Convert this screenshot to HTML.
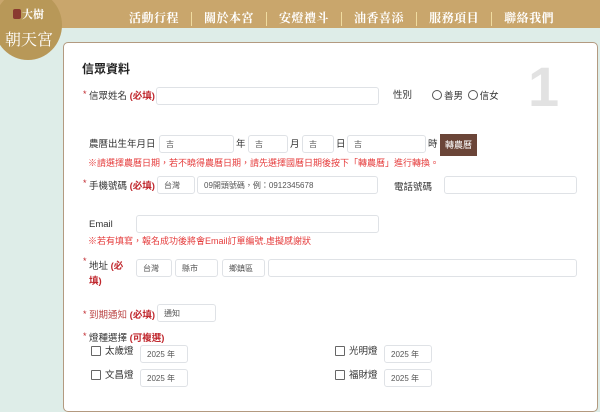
<!DOCTYPE html>
<html><head><meta charset="utf-8"><style>
*{margin:0;padding:0;box-sizing:border-box}
body{width:600px;height:407px;overflow:hidden;position:relative;background:#deede8;font-family:"Liberation Sans","Noto Sans CJK TC",sans-serif;font-size:9.5px;color:#333}
.a{position:absolute;white-space:nowrap;line-height:12px}
.top{position:absolute;left:0;top:0;width:600px;height:28px;background:#c9a66c}
.nav{position:absolute;top:11px;left:129px;font-family:"Noto Serif CJK SC",serif;font-size:12px;line-height:14px;color:#fff;font-weight:bold;letter-spacing:0.5px}
.sep{display:inline-block;width:1px;height:14px;background:#f0dca0;margin:0 12px;vertical-align:middle}
.logo{position:absolute;left:-6px;top:-10px;width:68px;height:70px;border-radius:50%;background:#b89858}
.card{position:absolute;left:63px;top:42px;width:535px;height:370px;background:#fff;border:1px solid #b39a80;border-radius:5px}
.in{position:absolute;border:1px solid #dfe2e6;border-radius:3px;background:#fff;height:18px;font-size:8px;line-height:10px;color:#555;padding:4px 0 0 6px}
.red{color:#c0272d;font-weight:bold}
.st{color:#c0272d;font-size:9px}
.warn{color:#e53b3b;font-size:9px}
.cb{position:absolute;width:10px;height:10px;border:1px solid #666;border-radius:1px;background:#fff}
.rd{display:inline-block;width:10px;height:10px;border:1px solid #555;border-radius:50%;vertical-align:-1px;margin-right:2px}
</style></head><body>
<div class="top"></div>
<div class="a nav"><span>活動行程</span><i class="sep"></i><span>關於本宮</span><i class="sep"></i><span>安燈禮斗</span><i class="sep"></i><span>油香喜添</span><i class="sep"></i><span>服務項目</span><i class="sep"></i><span>聯絡我們</span></div>
<div class="logo"></div>
<div class="a" style="left:13px;top:9px;width:8px;height:10px;background:#8a3a30;border-radius:2px"></div>
<div class="a" style="left:22px;top:8px;color:#fff;font-weight:bold;font-size:11px;font-family:'Noto Serif CJK SC',serif">大樹</div>
<div class="a" style="left:5px;top:30px;color:#fff;font-size:16px;line-height:18px;font-family:'Noto Serif CJK SC',serif">朝天宮</div>
<div class="card"></div>
<div class="a" style="left:82px;top:62px;font-size:12px;font-weight:bold;color:#222;line-height:14px">信眾資料</div>
<div class="a" style="left:528px;top:62px;font-size:56px;line-height:50px;font-weight:bold;color:#e2e2e2">1</div>
<div class="a st" style="left:83px;top:88px">*</div>
<div class="a" style="left:89px;top:91px">信眾姓名 <span class="red">(必填)</span></div>
<div class="in" style="left:156px;top:87px;width:223px"></div>
<div class="a" style="left:393px;top:90px">性別</div>
<div class="a" style="left:432px;top:90px"><i class="rd"></i>善男 <i class="rd" style="margin-left:2px"></i>信女</div>
<div class="a" style="left:89px;top:139px">農曆出生年月日</div>
<div class="in" style="left:159px;top:135px;width:75px">吉</div>
<div class="a" style="left:236px;top:139px">年</div>
<div class="in" style="left:248px;top:135px;width:40px">吉</div>
<div class="a" style="left:290px;top:139px">月</div>
<div class="in" style="left:302px;top:135px;width:32px">吉</div>
<div class="a" style="left:336px;top:139px">日</div>
<div class="in" style="left:347px;top:135px;width:79px">吉</div>
<div class="a" style="left:428px;top:139px">時</div>
<div class="a" style="left:440px;top:134px;width:37px;height:22px;background:#6b4538;color:#fff;font-size:9px;padding-top:5px;text-align:center">轉農曆</div>
<div class="a warn" style="left:88px;top:157px">※請選擇農曆日期，若不曉得農曆日期，請先選擇國曆日期後按下「轉農曆」進行轉換。</div>
<div class="a st" style="left:83px;top:177px">*</div>
<div class="a" style="left:89px;top:181px">手機號碼 <span class="red">(必填)</span></div>
<div class="in" style="left:157px;top:176px;width:38px">台灣</div>
<div class="in" style="left:197px;top:176px;width:181px">09開頭號碼，例：0912345678</div>
<div class="a" style="left:394px;top:182px">電話號碼</div>
<div class="in" style="left:444px;top:176px;width:133px"></div>
<div class="a" style="left:89px;top:219px">Email</div>
<div class="in" style="left:136px;top:215px;width:243px"></div>
<div class="a warn" style="left:88px;top:235px">※若有填寫，報名成功後將會Email訂單編號.虛擬感謝狀</div>
<div class="a st" style="left:83px;top:255px">*</div>
<div class="a" style="left:89px;top:259px;line-height:15px">地址 <span class="red">(必<br>填)</span></div>
<div class="in" style="left:136px;top:259px;width:36px">台灣</div>
<div class="in" style="left:175px;top:259px;width:43px">縣市</div>
<div class="in" style="left:222px;top:259px;width:43px">鄉鎮區</div>
<div class="in" style="left:268px;top:259px;width:309px"></div>
<div class="a st" style="left:83px;top:308px">*</div>
<div class="a" style="left:89px;top:310px;color:#b44"><span>到期通知</span> <span class="red">(必填)</span></div>
<div class="in" style="left:157px;top:304px;width:59px">通知</div>
<div class="a st" style="left:83px;top:330px">*</div>
<div class="a" style="left:89px;top:333px">燈種選擇 <span class="red">(可複選)</span></div>
<div class="cb" style="left:91px;top:346px"></div><div class="a" style="left:105px;top:346px">太歲燈</div>
<div class="in" style="left:140px;top:345px;width:48px">2025 年</div>
<div class="cb" style="left:91px;top:370px"></div><div class="a" style="left:105px;top:370px">文昌燈</div>
<div class="in" style="left:140px;top:369px;width:48px">2025 年</div>
<div class="cb" style="left:335px;top:346px"></div><div class="a" style="left:349px;top:346px">光明燈</div>
<div class="in" style="left:384px;top:345px;width:48px">2025 年</div>
<div class="cb" style="left:335px;top:370px"></div><div class="a" style="left:349px;top:370px">福財燈</div>
<div class="in" style="left:384px;top:369px;width:48px">2025 年</div>
</body></html>
